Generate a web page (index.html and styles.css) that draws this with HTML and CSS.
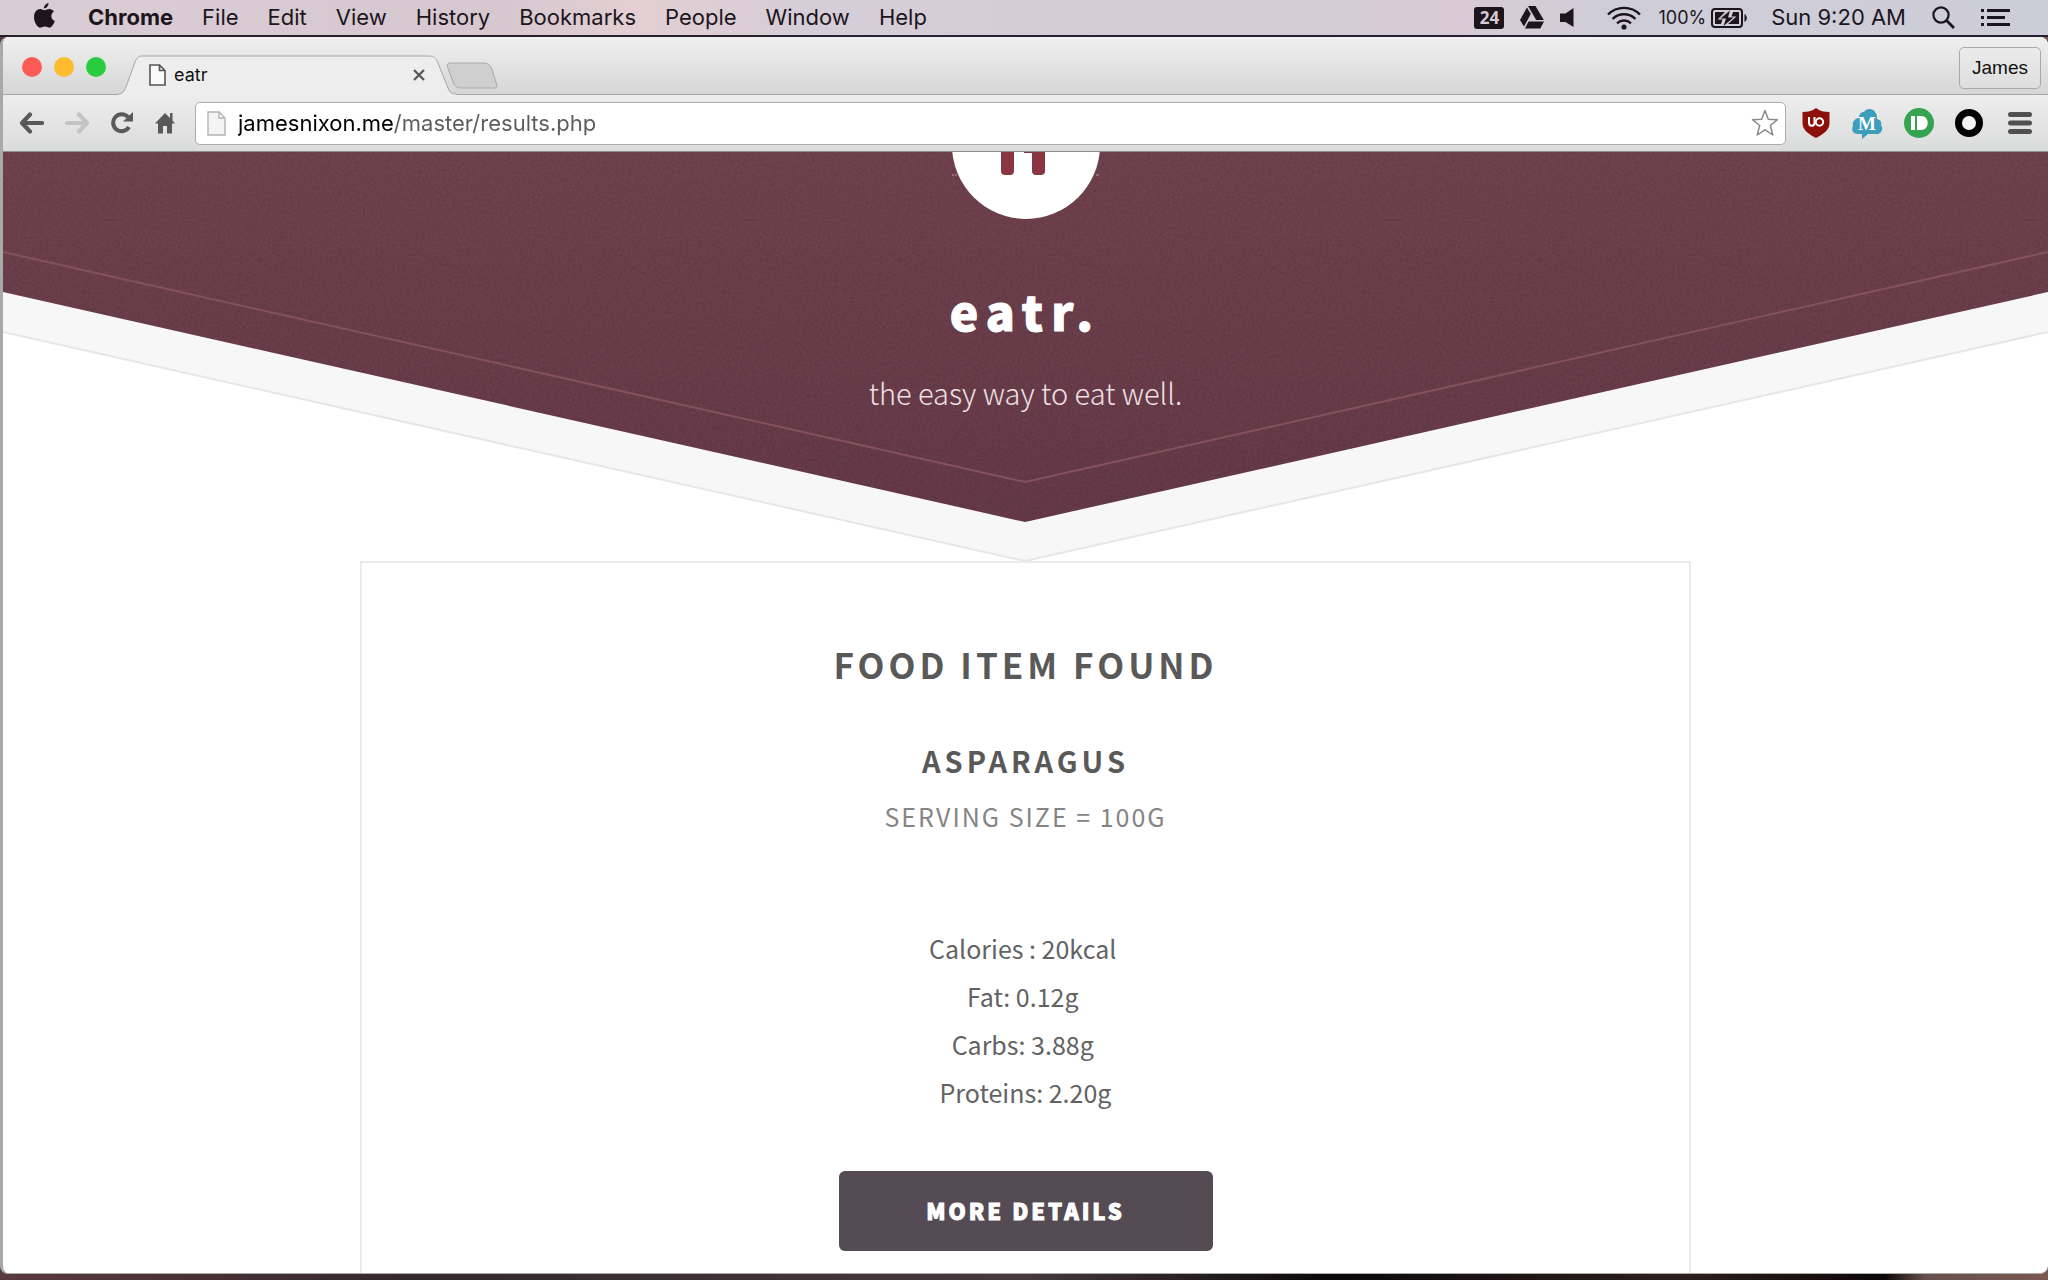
FILE: index.html
```html
<!DOCTYPE html>
<html lang="en">
<head>
  <meta charset="UTF-8">
  <meta name="viewport" content="width=device-width, initial-scale=1">
  <title>eatr</title>
  <link rel="stylesheet" href="styles.css">
</head>
<body>

  <!-- Menu bar -->
  <header class="menubar">
    <nav class="menus">
      <svg class="apple" width="21" height="26" viewBox="0 0 21 26">
        <path d="M14.5 0c.2 2.600-2 5.400-4.600 5.500C9.600 3 12 .4 14.500 0z"/>
        <path d="M10.400 7.300c1.100 0 2.600-1.300 4.900-1.300 1.900 0 3.700 1 4.700 2.600-4 2.400-3.300 7.900.800 9.400-.9 2.700-3 6.500-5.300 6.600-1.700 0-2.500-1.100-4.600-1.100s-3 1.100-4.600 1.100C3.400 24.600 0 19.200 0 14.200 0 9 3 6.100 6.200 6c1.800 0 3.100 1.300 4.200 1.300z"/>
      </svg>
      <a class="app" href="#">Chrome</a>
      <a href="#">File</a>
      <a href="#">Edit</a>
      <a href="#">View</a>
      <a href="#">History</a>
      <a href="#">Bookmarks</a>
      <a href="#">People</a>
      <a href="#">Window</a>
      <a href="#">Help</a>
    </nav>
    <div class="status">
      <div class="tray">
        <span class="count">24</span>
        <svg width="24" height="23" viewBox="0 0 24 23">
          <path d="M8 0h7.500l8.300 14h-7.600z"/>
          <path d="M7 1.500l3.800 6.600L4 20.500 0 14z"/>
          <path d="M8.500 15.500H24L20.300 22.500H5z"/>
        </svg>
        <svg width="30" height="20" viewBox="0 0 30 20">
          <path d="M0 5.500h5.500L13.500 0v19L5.500 14H0z"/>
        </svg>
        <svg width="36" height="24" viewBox="0 0 36 24">
          <g fill="none" stroke="#1d151d" stroke-width="2.400">
            <path d="M2 8.500C11-.4 25-.4 34 8.500"/>
            <path d="M6.500 13c6.500-6.300 16.500-6.300 23 0"/>
            <path d="M11 17.300c4-3.700 10-3.700 14 0"/>
          </g>
          <circle cx="18" cy="21" r="2.600"/>
        </svg>
        <span class="battery">100%
          <svg width="37" height="20" viewBox="0 0 37 20">
            <rect x="1" y="1" width="30" height="18" rx="3" fill="none" stroke="#1d151d" stroke-width="2"/>
            <path d="M4 4h10L6.500 11.500h5L10 16H4zM22 4h6v12H17l8.500-7.500H20.500z"/>
            <path d="M19 2.500L9.500 10.500h5.500L12.500 18l10-8.500h-5.500z"/>
            <path d="M33.500 6c3 1.500 3 6.500 0 8z"/>
          </svg>
        </span>
      </div>
      <div class="clock">
        <span>Sun 9:20 AM</span>
        <svg width="23" height="23" viewBox="0 0 23 23">
          <g fill="none" stroke="#1d151d" stroke-width="2.200">
            <circle cx="9" cy="9" r="7.600"/>
            <path d="M14.500 14.500L22 22" stroke-width="2.800"/>
          </g>
        </svg>
        <svg width="30" height="17" viewBox="0 0 30 17">
          <path d="M0 0h3v3H0zM0 7h3v3H0zM0 14h3v3H0zM6 0h23v3H6zM6 7h18v3H6zM6 14h23v3H6z"/>
        </svg>
      </div>
    </div>
  </header>

  <div class="window">

    <!-- Tab strip -->
    <div class="tabstrip">
      <div class="lights">
        <button class="light red" aria-label="Close window"></button>
        <button class="light yellow" aria-label="Minimise"></button>
        <button class="light green" aria-label="Zoom"></button>
      </div>
      <div class="tab">
        <svg class="tab-shape" width="338" height="40" viewBox="0 0 338 40">
          <path d="M0 39C5 39 6 36 8 32L17 7C19 2 21 1 25 1H311C316 1 318 3 320 8L330 33C332 38 334 39 338 39V40H0z" fill="#ededed"/>
          <path d="M0 39C5 39 6 36 8 32L17 7C19 2 21 1 25 1H311C316 1 318 3 320 8L330 33C332 38 334 39 338 39" fill="none" stroke="#a6a6a6"/>
        </svg>
        <svg width="17" height="22" viewBox="0 0 17 22">
          <path d="M1 1h9.500L16 6.500V21H1zM10.500 1v5.500H16" fill="#fafafa" stroke="#555" stroke-width="1.600"/>
        </svg>
        <span class="tab-title">eatr</span>
        <button class="tab-close" aria-label="Close tab">
          <svg width="12" height="12" viewBox="0 0 12 12">
            <path d="M1 1l10 10M11 1L1 11" fill="none" stroke="#555" stroke-width="2.200"/>
          </svg>
        </button>
      </div>
      <button class="newtab" aria-label="New tab">
        <svg width="52" height="27" viewBox="0 0 52 27">
          <path d="M4 1h34c4 0 6 2 7.500 5l5 16c1 3 0 4-2 4H15c-4 0-6-2-7.500-5L1.500 5C.6 2.500 2 1 4 1z" fill="#cfcfcf" stroke="#a8a8a8"/>
        </svg>
      </button>
      <button class="profile">James</button>
    </div>

    <!-- Toolbar -->
    <div class="toolbar">
      <div class="nav-buttons">
        <button aria-label="Back">
          <svg width="25" height="22" viewBox="0 0 25 22">
            <path d="M11 2.500L3 11l8 8.500M3.500 11H23" fill="none" stroke="#595959" stroke-width="4.200" stroke-linecap="round" stroke-linejoin="round"/>
          </svg>
        </button>
        <button aria-label="Forward">
          <svg width="25" height="22" viewBox="0 0 25 22">
            <path d="M14 2.500l8 8.500-8 8.500M21.500 11H2" fill="none" stroke="#c4c4c4" stroke-width="4.200" stroke-linecap="round" stroke-linejoin="round"/>
          </svg>
        </button>
        <button aria-label="Reload">
          <svg width="23" height="22" viewBox="0 0 23 22">
            <path d="M18 15A8.500 8.500 0 1 1 17 5" fill="none" stroke="#595959" stroke-width="4"/>
            <path d="M22 0v9.500H12z" fill="#595959"/>
          </svg>
        </button>
        <button aria-label="Home">
          <svg width="20" height="22" viewBox="0 0 20 22">
            <path d="M10 1L0 11.500h3V21.500h5V14h4v7.500h5V11.500h3L17.500 8.500V1H15v5z" fill="#595959"/>
          </svg>
        </button>
      </div>
      <div class="omnibox">
        <svg width="19" height="25" viewBox="0 0 19 25">
          <path d="M1 1h11l6 6v17H1zM12 1v6h6" fill="#f4f4f4" stroke="#b3b3b3" stroke-width="1.400"/>
        </svg>
        <input class="url" type="text" aria-label="Address" value="jamesnixon.me/master/results.php">
        <svg width="28" height="28" viewBox="0 0 28 28">
          <path d="M14 1.500l3.300 8.700 9.200.5-7.200 5.800 2.500 9.500L14 20.800 6.200 26l2.500-9.500L1.500 10.700l9.200-.5z" fill="#fff" stroke="#8a8a8a" stroke-width="1.500" stroke-linejoin="round"/>
        </svg>
      </div>
      <div class="extensions">
        <svg width="28" height="30" viewBox="0 0 28 30">
          <path d="M14 0c4 3 8 4 13.500 4v11c0 7-6 11-13.500 15C6.500 26 .5 22 .5 15V4C6 4 10 3 14 0z" fill="#8d0f0a"/>
          <path d="M7 9v5.500a2.500 3 0 0 0 5.500 0V9" fill="none" stroke="#fff" stroke-width="2"/>
          <circle cx="17.500" cy="14" r="3.700" fill="none" stroke="#fff" stroke-width="2"/>
        </svg>
        <svg width="32" height="31" viewBox="0 0 32 31">
          <path d="M8 10C8 5 11 4 13 4C15 0 22 0 24 4C26 6 26 9 26 11C30 12 31 15 30 17C33 21 30 26 26 26H17L11 31V26H7C2 26 0 22 2 18C1 14 4 10 8 10z" fill="#3d9dbb"/>
          <text x="16" y="22" text-anchor="middle" class="ext-letter">M</text>
        </svg>
        <svg width="30" height="30" viewBox="0 0 30 30">
          <circle cx="15" cy="15" r="15" fill="#36a350"/>
          <path d="M7 8h4v14H7zM13 8h4c9 0 9 14 0 14h-4z" fill="#fff"/>
        </svg>
        <svg width="28" height="28" viewBox="0 0 28 28">
          <circle cx="14" cy="14" r="10.500" fill="#f4f4f4" stroke="#000" stroke-width="7"/>
        </svg>
        <button class="burger" aria-label="Menu">
          <svg width="24" height="22" viewBox="0 0 24 22">
            <path d="M2.500 2.500h19M2.500 11h19M2.500 19.500h19" stroke="#505050" stroke-width="5" stroke-linecap="round"/>
          </svg>
        </button>
      </div>
    </div>

    <!-- Page -->
    <main class="page">
      <section class="hero">
        <svg class="hero-bg" viewBox="0 0 2045 409" preserveAspectRatio="none">
          <defs>
            <linearGradient id="wine" x1="0" y1="0" x2="0" y2="1">
              <stop offset="0" stop-color="#71434f"/>
              <stop offset="1" stop-color="#673a49"/>
            </linearGradient>
            <filter id="grain" x="0" y="0" width="100%" height="100%">
              <feTurbulence type="fractalNoise" baseFrequency="0.400" numOctaves="2" result="noise"/>
              <feColorMatrix in="noise" type="matrix" values="0 0 0 0 0  0 0 0 0 0  0 0 0 0 0  .5 0 0 0 -.15"/>
              <feComposite in2="SourceGraphic" operator="in"/>
            </filter>
          </defs>
          <path d="M0 0H2045V180L1022 409L0 180z" fill="#f7f7f7"/>
          <path d="M0 180L1022 409L2045 180" fill="none" stroke="#e6e6e6" stroke-width="2"/>
          <path d="M0 0H2045V140L1022 370L0 140z" fill="url(#wine)"/>
          <path d="M0 0H2045V140L1022 370L0 140z" filter="url(#grain)" opacity=".4"/>
          <path d="M0 100L1022 330L2045 100" fill="none" stroke="#85515f" stroke-width="2"/>
        </svg>
        <svg class="logo" width="150" height="67" viewBox="0 0 150 67">
          <circle cx="75" cy="-7" r="74" fill="#fff"/>
          <path d="M50 0h13v19a4 4 0 0 1-4 4h-5a4 4 0 0 1-4-4zM81 0h13v19a4 4 0 0 1-4 4h-5a4 4 0 0 1-4-4zM73 0h8v1h-8z" fill="#8a3542"/>
          <path d="M1 23h2M4 23h2M145 23h3" stroke="#b79aa3"/>
        </svg>
        <h1>eatr.</h1>
        <p>the easy way to eat well.</p>
      </section>

      <section class="card">
        <h2>Food item found</h2>
        <h3>Asparagus</h3>
        <p class="serving">Serving size = 100g</p>
        <ul class="facts">
          <li>Calories : 20kcal&nbsp;</li>
          <li>Fat: 0.12g&nbsp;</li>
          <li>Carbs: 3.88g&nbsp;</li>
          <li>Proteins: 2.20g</li>
        </ul>
        <button class="more">More details</button>
      </section>
    </main>
  </div>

</body>
</html>
```
FILE: styles.css
```css
/* Global */
* {
  margin: 0;
  padding: 0;
  box-sizing: border-box;
}
body {
  height: 100vh;
  display: flex;
  flex-direction: column;
  overflow: hidden;
  font-family: Inter, sans-serif;
  color: #1d151d;
  background: linear-gradient(90deg, #5a393f, #33282b 20%, #463a3c 50%, #0c0808 65%, #2c1f20 82%, #0c0606 92%, #66504e 94%, #7a5850);
}
svg {
  display: block;
  flex: none;
}
a {
  color: inherit;
  text-decoration: none;
}
button {
  font: inherit;
  border: none;
  background: none;
  cursor: pointer;
}

/* Menu bar */
.menubar {
  flex: none;
  height: 37px;
  display: flex;
  justify-content: space-between;
  align-items: center;
  padding: 0 37px 0 34px;
  font-size: 22px;
  line-height: 35px;
  background: linear-gradient(90deg, #d9cdd4, #d7c8d0 25%, #e3cfd3 31%, #d5cdd7 40%, #d3ccd7 65%, #d8cad4 71%, #cfced8 78%, #cdcdd8);
  border-bottom: 2px solid #262230;
}
.menubar svg {
  fill: #1d151d;
}
.menus {
  display: flex;
  align-items: center;
  gap: 29px;
}
.apple {
  margin: 0 4px 4px 0;
}
.app {
  font-weight: 700;
}
.status,
.tray,
.clock,
.battery {
  display: flex;
  align-items: center;
}
.status {
  gap: 23px;
}
.tray {
  gap: 16px;
}
.clock {
  gap: 26px;
}
.battery {
  gap: 5px;
  font-size: 18px;
}
.count {
  width: 30px;
  border-radius: 3px;
  background: #1d151d;
  color: #d8cad4;
  font: 700 17px/22px "Open Sans", sans-serif;
  text-align: center;
}

/* Browser window */
.window {
  flex: 1;
  min-height: 0;
  display: flex;
  flex-direction: column;
  margin-bottom: 6px;
  border-left: 3px solid #a9a9a9;
  border-bottom: 1px solid #aaa;
  border-radius: 8px;
  overflow: hidden;
  background: #fff;
}
.tabstrip {
  flex: none;
  height: 58px;
  display: flex;
  align-items: flex-end;
  padding: 0 7px 0 19px;
  background: linear-gradient(#f0f0f0, #d6d6d6);
  border-bottom: 1px solid #a6a6a6;
}
.lights {
  display: flex;
  gap: 12px;
  margin: 0 12px 17px 0;
}
.light {
  width: 20px;
  height: 20px;
  border-radius: 50%;
}
.red { background: #fc5b57; }
.yellow { background: #fdbc2d; }
.green { background: #27cd3f; }
.tab {
  position: relative;
  width: 338px;
  height: 40px;
  margin-bottom: -1px;
  padding: 0 31px;
  display: flex;
  align-items: center;
  gap: 8px;
}
.tab-shape {
  position: absolute;
  left: 0;
  top: 0;
}
.tab > :not(.tab-shape) {
  z-index: 1;
}
.tab-title {
  flex: 1;
  font-size: 18px;
  line-height: 24px;
  color: #111;
}
.newtab {
  margin: 0 0 5px -10px;
}
.profile {
  width: 82px;
  height: 42px;
  margin: 0 0 5px auto;
  border: 1px solid #a9a9a9;
  border-radius: 5px;
  background: linear-gradient(#ebebeb, #dedede);
  font: 19px "Liberation Sans", sans-serif;
  color: #111;
}
.toolbar {
  flex: none;
  height: 57px;
  display: flex;
  align-items: center;
  gap: 16px;
  padding: 0 16px;
  background: linear-gradient(#ededed, #dadcdb);
  border-bottom: 1px solid #8f8f8f;
}
.nav-buttons {
  display: flex;
  gap: 21px;
  padding-right: 4px;
}
.omnibox {
  flex: 1;
  height: 43px;
  display: flex;
  align-items: center;
  gap: 12px;
  padding: 0 6px 0 11px;
  border: 1px solid #adadad;
  border-radius: 5px;
  background: #fff;
}
/* host part is darker than the path */
.url {
  flex: 1;
  border: none;
  outline: none;
  font: 22px/30px Inter, sans-serif;
  color: transparent;
  background: linear-gradient(90deg, #000 156px, #5c5c5c 156px);
  -webkit-background-clip: text;
  background-clip: text;
}
.extensions {
  display: flex;
  align-items: center;
  gap: 21px;
}
.burger {
  margin-left: 4px;
}
.ext-letter {
  font: 700 19px "Liberation Serif", serif;
  fill: #fff;
}

/* Page */
.page {
  flex: 1;
  min-height: 0;
  display: flex;
  flex-direction: column;
  align-items: center;
  overflow: hidden;
  font-family: "Noto Sans CJK SC", sans-serif;
  text-align: center;
}
.hero {
  flex: none;
  position: relative;
  width: 100%;
  height: 409px;
  color: #fff;
}
.hero-bg {
  position: absolute;
  inset: 0;
  width: 100%;
  height: 100%;
}
.logo,
.hero h1,
.hero p {
  position: relative;
}
.logo {
  margin: 0 auto;
}
.hero h1 {
  margin-top: 59px;
  font-size: 48px;
  line-height: 64px;
  font-weight: 900;
  letter-spacing: 8px;
  -webkit-text-stroke: 1px #fff;
}
.hero p {
  margin-top: 30px;
  font-size: 29px;
  line-height: 40px;
  font-weight: 300;
  color: #f0e0e4;
}
.card {
  flex: 1 0 auto;
  width: calc(65% + 2px);
  padding-top: 77px;
  border: 2px solid #ebebeb;
  border-bottom: none;
  color: #595959;
}
.card h2 {
  font-size: 35px;
  line-height: 48px;
  font-weight: 700;
  letter-spacing: 4px;
  text-transform: uppercase;
}
.card h3 {
  margin-top: 52px;
  font-size: 29px;
  line-height: 40px;
  font-weight: 700;
  letter-spacing: 4px;
  text-transform: uppercase;
}
.serving {
  margin-top: 16px;
  font-size: 25px;
  line-height: 40px;
  letter-spacing: 2px;
  text-transform: uppercase;
  color: #858585;
}
.facts {
  margin-top: 88px;
  list-style: none;
  font-size: 25px;
  line-height: 48px;
  color: #636363;
}
.more {
  width: 374px;
  height: 80px;
  margin-top: 55px;
  padding-bottom: 2px;
  border-radius: 6px;
  background: #544b54;
  color: #fff;
  font-size: 22px;
  font-weight: 900;
  letter-spacing: 3px;
  text-transform: uppercase;
  -webkit-text-stroke: 1px #fff;
}
```
